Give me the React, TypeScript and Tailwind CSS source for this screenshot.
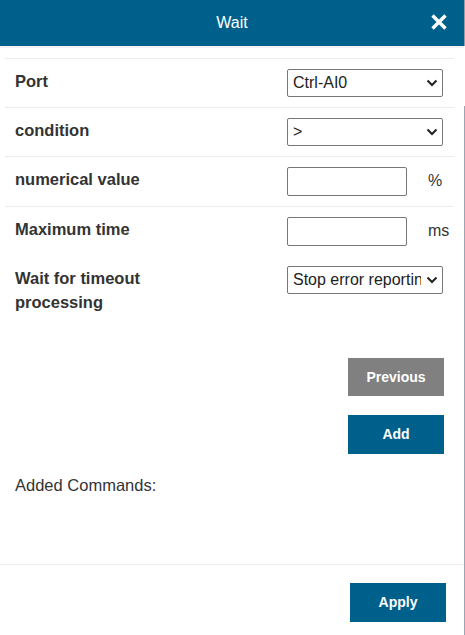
import React from 'react'

const FONT = { fontFamily: '"Liberation Sans", Arial, sans-serif' }

function Chevron() {
  return (
    <svg
      className="pointer-events-none absolute right-[5px] top-1/2 -translate-y-1/2"
      width="12"
      height="8"
      viewBox="0 0 12 8"
    >
      <polyline points="1.5,1.5 6,6 10.5,1.5" fill="none" stroke="#222" strokeWidth="2" />
    </svg>
  )
}

function Select({ value, options }: { value: string; options: string[] }) {
  return (
    <div className="relative w-[156px] h-[28px]">
      <select
        defaultValue={value}
        className="appearance-none w-full h-full border border-[#767676] rounded-[2px] bg-white pl-[5px] pr-[21px] text-[16px] text-[#222] outline-none"
      >
        {options.map((o) => (
          <option key={o}>{o}</option>
        ))}
      </select>
      <Chevron />
    </div>
  )
}

function Row({
  label,
  children,
  border = true,
  pb = 'pb-[10px]',
}: {
  label: React.ReactNode
  children: React.ReactNode
  border?: boolean
  pb?: string
}) {
  return (
    <div className={`flex items-start pl-[10px] pt-[10px] ${pb} ${border ? 'border-t border-[#ececec]' : ''}`}>
      <div className="w-[272px] text-[16.5px] leading-[24px] font-bold text-[#333]">{label}</div>
      {children}
    </div>
  )
}

export default function App() {
  return (
    <div className="flex w-[465px] h-[635px] bg-white" style={FONT}>
      <div className="w-[464px] h-full flex flex-col">
        <div className="relative h-[46px] shrink-0 bg-[#00608c] flex items-center justify-center">
          <span className="text-white text-[16px]">Wait</span>
          <svg className="absolute right-[16px] top-[13px]" width="18" height="18" viewBox="0 0 18 18">
            <path d="M2.5 2.5 L15.5 15.5 M15.5 2.5 L2.5 15.5" stroke="#fff" strokeWidth="3.4" strokeLinecap="butt" />
          </svg>
        </div>
        <div className="h-[2px] bg-[#f2f2f2]" />

        <div className="mt-[10px] ml-[5px] mr-[10px]">
          <Row label="Port">
            <Select value="Ctrl-AI0" options={['Ctrl-AI0', 'Ctrl-AI1']} />
          </Row>
          <Row label="condition">
            <Select value=">" options={['>', '<', '=']} />
          </Row>
          <Row label="numerical value">
            <input className="w-[120px] h-[29px] border border-[#767676] rounded-[2px] outline-none" />
            <span className="ml-[21px] mt-[2px] text-[16px] text-[#333]">%</span>
          </Row>
          <Row label="Maximum time" pb="pb-[20px]">
            <input className="w-[120px] h-[29px] border border-[#767676] rounded-[2px] outline-none" />
            <span className="ml-[21px] mt-[2px] text-[16px] text-[#333]">ms</span>
          </Row>
          <div className="flex items-start pl-[10px]">
            <div className="w-[272px] text-[16.5px] leading-[24px] font-bold text-[#333]">
              Wait for timeout
              <br />
              processing
            </div>
            <Select value="Stop error reporting" options={['Stop error reporting', 'Continue']} />
          </div>
        </div>

        <div className="flex flex-col items-end gap-[19px] mt-[44px] pr-[20px]">
          <button className="w-[96px] h-[38px] bg-[#808080] text-white text-[14px] font-bold">Previous</button>
          <button className="w-[96px] h-[39px] bg-[#00608c] text-white text-[14px] font-bold">Add</button>
        </div>

        <div className="mt-[19px] pl-[15px] text-[16.5px] text-[#333] leading-[24px]">Added Commands:</div>

        <div className="mt-[67px] border-t border-[#ececec] flex justify-end pt-[18px] pr-[18px]">
          <button className="w-[96px] h-[39px] bg-[#00608c] text-white text-[14px] font-bold">Apply</button>
        </div>
      </div>
      <div className="w-[1px] h-full flex flex-col">
        <div className="h-[46px] bg-[#8f9cab]" />
        <div className="h-[60px] bg-white" />
        <div className="flex-1 bg-[#9aa6b3]" />
      </div>
    </div>
  )
}
